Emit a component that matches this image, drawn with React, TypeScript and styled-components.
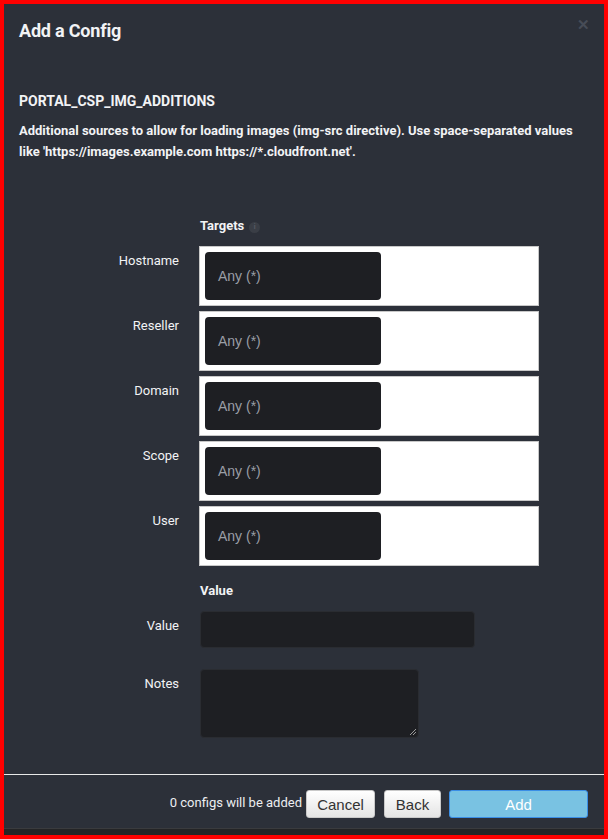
import React from "react";
import styled, { createGlobalStyle } from "styled-components";

const Global = createGlobalStyle`
  html, body { margin: 0; padding: 0; background: #2c3039; }
  * { box-sizing: border-box; }
  body { font-family: Roboto, "Liberation Sans", Arial, sans-serif; }
`;

const Frame = styled.div`
  width: 608px;
  height: 839px;
  border: 4px solid #ff0000;
  background: #2c3039;
  display: flex;
  flex-direction: column;
  color: #f2f3f5;
`;

const Body = styled.div`
  flex: 1;
  padding: 0 15px;
  position: relative;
`;

const Title = styled.h2`
  margin: 0;
  padding-top: 16px;
  font-size: 18px;
  line-height: 22px;
  font-weight: 700;
  letter-spacing: -0.2px;
`;

const Close = styled.span`
  position: absolute;
  right: 14px;
  top: 13px;
  font-size: 15px;
  line-height: 16px;
  color: #474c57;
  font-weight: 700;
`;

const Key = styled.div`
  margin-top: 50px;
  font-size: 14px;
  line-height: 18px;
  font-weight: 700;
`;

const Desc = styled.p`
  margin: 10px 0 0;
  max-width: 560px;
  font-size: 13px;
  line-height: 21px;
  font-weight: 700;
`;

const Form = styled.div`
  margin-top: 55px;
  display: grid;
  grid-template-columns: 160px 1fr;
  column-gap: 20px;
`;

const SectionHead = styled.div<{ $gap?: number }>`
  grid-column: 2;
  font-size: 13px;
  line-height: 18px;
  font-weight: 700;
  display: flex;
  align-items: center;
  gap: 5px;
  margin-left: 1px;
  margin-top: ${(p) => p.$gap ?? 0}px;
  margin-bottom: 11px;
`;

const Info = styled.span`
  width: 11px;
  height: 11px;
  border-radius: 50%;
  background: #3a3e46;
  display: inline-flex;
  align-items: center;
  justify-content: center;
  font-size: 7px;
  color: #555a64;
  margin-top: 2px;
`;

const Label = styled.div<{ $top: number }>`
  grid-column: 1;
  text-align: right;
  font-size: 13px;
  line-height: 18px;
  font-weight: 400;
  padding-top: ${(p) => p.$top}px;
`;

const TargetBox = styled.div`
  grid-column: 2;
  width: 340px;
  height: 60px;
  background: #ffffff;
  border: 1px solid #c8c8c8;
  padding: 5px;
  margin-bottom: 5px;
`;

const AnyInput = styled.div`
  width: 176px;
  height: 48px;
  background: #1e1f23;
  border-radius: 4px;
  display: flex;
  align-items: center;
  padding-left: 13px;
  padding-bottom: 1px;
  font-family: "Liberation Sans", Arial, sans-serif;
  font-size: 14px;
  color: #9a9ea6;
`;

const ValueInput = styled.div`
  grid-column: 2;
  margin-left: 1px;
  width: 275px;
  height: 37px;
  background: #1e1f23;
  border: 1px solid #2a2c31;
  border-radius: 4px;
  margin-bottom: 21px;
`;

const NotesArea = styled.div`
  grid-column: 2;
  margin-left: 1px;
  width: 219px;
  height: 69px;
  background: #1e1f23;
  border: 1px solid #2a2c31;
  border-radius: 4px;
  position: relative;
`;

const Grip = styled.svg`
  position: absolute;
  right: 1px;
  bottom: 1px;
`;

const Footer = styled.div`
  border-top: 1px solid #e8e8e8;
  height: 54px;
  display: flex;
  justify-content: flex-end;
  align-items: flex-start;
  padding: 15px 16px 0 0;
`;

const Count = styled.span`
  font-size: 13px;
  line-height: 18px;
  color: #eceef1;
  margin-top: 4px;
  margin-right: 4px;
`;

const Btn = styled.button<{ $w: number; $primary?: boolean }>`
  width: ${(p) => p.$w}px;
  height: 28px;
  margin-left: ${(p) => (p.$primary ? 8 : 9)}px;
  border-radius: 3px;
  font-family: "Liberation Sans", Arial, sans-serif;
  font-size: 15px;
  padding: 0;
  border: 1px solid ${(p) => (p.$primary ? "#3a8ee6" : "#c9c9c9")};
  background: ${(p) =>
    p.$primary ? "#79c2e2" : "linear-gradient(#ffffff, #e4e4e4)"};
  color: ${(p) => (p.$primary ? "#ffffff" : "#333333")};
  &:first-of-type { margin-left: 0; }
`;

const Strip = styled.div`
  height: 7px;
  background: #242426;
  border-top: 1px solid #3a3b3e;
`;

const targets = ["Hostname", "Reseller", "Domain", "Scope", "User"];

export default function App() {
  return (
    <>
      <Global />
      <Frame>
        <Body>
          <Title>Add a Config</Title>
          <Close>✕</Close>
          <Key>PORTAL_CSP_IMG_ADDITIONS</Key>
          <Desc>
            Additional sources to allow for loading images (img-src directive). Use
            space-separated values like 'https://images.example.com
            https://*.cloudfront.net'.
          </Desc>
          <Form>
            <SectionHead>
              Targets <Info>i</Info>
            </SectionHead>
            {targets.map((t) => (
              <React.Fragment key={t}>
                <Label $top={6}>{t}</Label>
                <TargetBox>
                  <AnyInput>Any (*)</AnyInput>
                </TargetBox>
              </React.Fragment>
            ))}
            <SectionHead $gap={11}>Value</SectionHead>
            <Label $top={6}>Value</Label>
            <ValueInput />
            <Label $top={6}>Notes</Label>
            <NotesArea>
              <Grip width="8" height="8" viewBox="0 0 8 8">
                <path d="M7 1 L1 7 M7 4 L4 7" stroke="#9a9a9a" strokeWidth="1" />
              </Grip>
            </NotesArea>
          </Form>
        </Body>
        <Footer>
          <Count>0 configs will be added</Count>
          <Btn $w={69}>Cancel</Btn>
          <Btn $w={57}>Back</Btn>
          <Btn $w={139} $primary>
            Add
          </Btn>
        </Footer>
        <Strip />
      </Frame>
    </>
  );
}
